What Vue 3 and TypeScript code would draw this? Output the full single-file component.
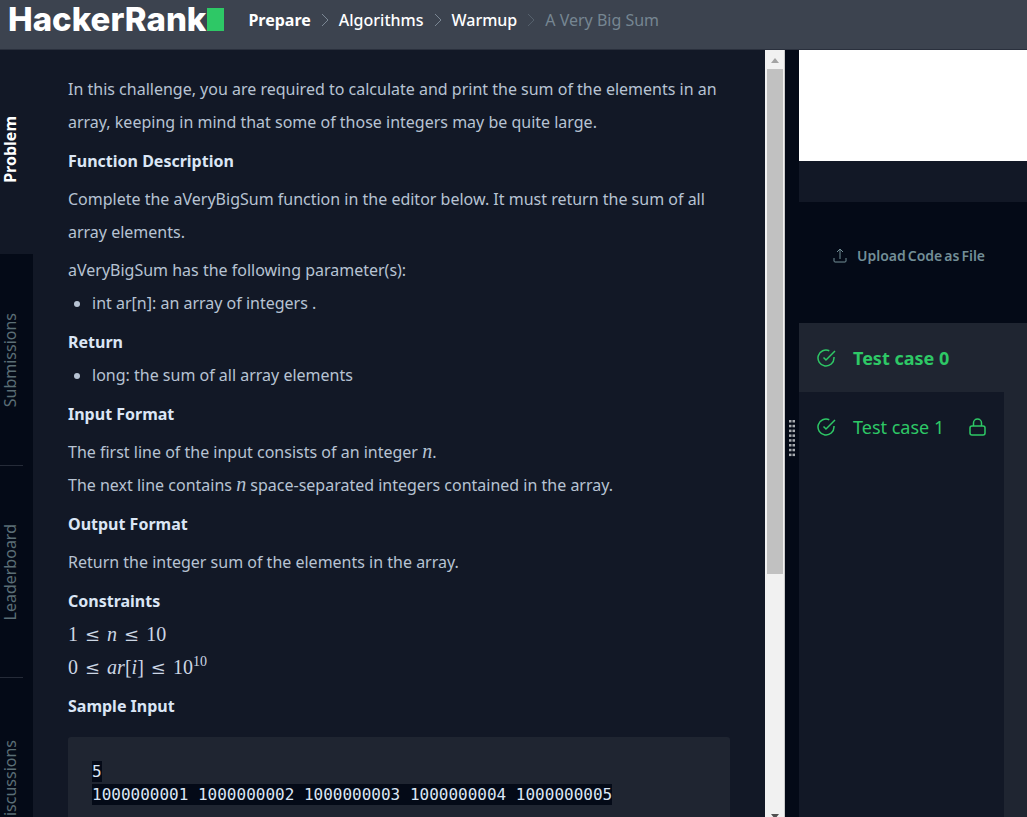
<script setup lang="ts">
import { ref } from 'vue'

const crumbs: string[] = ['Prepare', 'Algorithms', 'Warmup']
const tabs: string[] = ['Problem', 'Submissions', 'Leaderboard', 'Discussions']
const activeTab = ref<string>('Problem')
const uploadWords: string[] = ['Upload', 'Code', 'as', 'File']
const cases = [
  { name: 'Test case 0', locked: false },
  { name: 'Test case 1', locked: true },
]
const activeCase = ref<number>(0)
const sampleInput: string = '5\n1000000001 1000000002 1000000003 1000000004 1000000005'
</script>

<template>
  <div class="page">
    <header class="topbar">
      <a class="logo" href="#"><span>HackerRank</span><i class="block"></i></a>
      <nav class="crumbs" aria-label="Breadcrumb">
        <template v-for="(c, i) in crumbs" :key="c">
          <a href="#" :class="{ strong: i === 0 }">{{ c }}</a>
          <svg class="chevron" :class="{ faint: i === 2 }" viewBox="0 0 8 14" aria-hidden="true"><path d="M1 1l6 6-6 6" /></svg>
        </template>
        <span class="current">A Very Big Sum</span>
      </nav>
    </header>

    <div class="workspace">
      <nav class="tabs" aria-label="Challenge">
        <button v-for="t in tabs" :key="t" type="button" class="tab" :class="{ active: activeTab === t }" @click="activeTab = t">
          <span>{{ t }}</span>
        </button>
      </nav>

      <main class="problem">
        <p>In this challenge, you are required to calculate and print the sum of the elements in an array, keeping in mind that some of those integers may be quite large.</p>
        <h2>Function Description</h2>
        <p>Complete the aVeryBigSum function in the editor below. It must return the sum of all array elements.</p>
        <p>aVeryBigSum has the following parameter(s):</p>
        <ul><li>int ar[n]: an array of integers .</li></ul>
        <h2>Return</h2>
        <ul><li>long: the sum of all array elements</li></ul>
        <h2>Input Format</h2>
        <p>The first line of the input consists of an integer <span class="math"><i>n</i></span>.<br>The next line contains <span class="math"><i>n</i></span> space-separated integers contained in the array.</p>
        <h2>Output Format</h2>
        <p>Return the integer sum of the elements in the array.</p>
        <h2>Constraints</h2>
        <div class="formula math">1<b>≤</b><i>n</i><b>≤</b>10</div>
        <div class="formula math">0<b>≤</b><i>ar</i>[<i>i</i>]<b>≤</b>10<sup>10</sup></div>
        <h2>Sample Input</h2>
        <pre><code>{{ sampleInput }}</code></pre>
      </main>

      <div class="scrollbar" aria-hidden="true">
        <svg class="arrow up" viewBox="0 0 8 5"><path d="M0 5l4-5 4 5z" /></svg>
        <div class="track"><div class="thumb"></div></div>
        <svg class="arrow down" viewBox="0 0 8 5"><path d="M0 0h8l-4 5z" /></svg>
      </div>

      <div class="splitter">
        <svg class="grip" viewBox="0 0 6 37" aria-hidden="true">
          <template v-for="r in 8" :key="r">
            <rect x="0" :y="(r - 1) * 4.8" width="2.500" height="2.500" />
            <rect x="3.500" :y="(r - 1) * 4.8" width="2.500" height="2.500" />
          </template>
        </svg>
      </div>

      <aside class="side">
        <div class="editor"></div>
        <div class="status"></div>
        <div class="actions">
          <button type="button" class="upload">
            <svg viewBox="0 0 14 15" aria-hidden="true"><path d="M7 11V1M4 4l3-3 3 3M1 10v3q0 1 1 1h10q1 0 1-1v-3" /></svg>
            <span class="words"><span v-for="w in uploadWords" :key="w">{{ w }}</span></span>
          </button>
        </div>
        <div class="results">
          <button v-for="(c, i) in cases" :key="c.name" type="button" class="case" :class="{ active: activeCase === i }" @click="activeCase = i">
            <svg class="check" viewBox="0 0 19 18" aria-hidden="true"><path d="M17 8v1a8 8 0 1 1-4.700-7.300M18 2l-9 9-2.500-2.500" /></svg>
            <span>{{ c.name }}</span>
            <svg v-if="c.locked" class="lock" viewBox="0 0 17 18" aria-hidden="true"><rect x="1" y="8" width="15" height="9" rx="2" /><path d="M4.500 8V5a4 4 0 0 1 8 0v3" /></svg>
          </button>
          <div class="rest"></div>
        </div>
      </aside>
    </div>
  </div>
</template>

<style>
body { margin: 0; background: #040a17; }
</style>

<style scoped>
.page {
  height: 100vh;
  overflow: hidden;
  display: flex;
  flex-direction: column;
  font-family: "Noto Sans", "Open Sans", sans-serif;
  font-size: 16px;
  color: #b7c3d3;
  background: #040a17;
}
button { font: inherit; border: 0; padding: 0; background: none; cursor: pointer; }
a { color: inherit; text-decoration: none; }
svg { fill: none; flex: none; }

.topbar {
  flex: none;
  height: 50px;
  box-sizing: border-box;
  padding: 0 8px 10px;
  display: flex;
  align-items: center;
  gap: 24px;
  background: #3c434f;
  border-bottom: 1px solid #2a303d;
}
.logo { display: flex; align-items: center; gap: 1px; font-family: Inter, "Noto Sans", sans-serif; font-size: 33px; line-height: 39px; font-weight: 800; color: #fff; }
.block { width: 17px; height: 23px; background: #2ec866; }
.crumbs { display: flex; align-items: center; gap: 10px; color: #fff; font-weight: 500; }
.crumbs .strong { font-weight: 700; }
.chevron { width: 8px; height: 14px; stroke: #7b8794; }
.chevron.faint { stroke: #55606c; }
.current { color: #768692; font-weight: 400; }

.workspace { flex: 1; min-height: 0; display: flex; }

.tabs { width: 33px; flex: none; display: flex; flex-direction: column; }
.tab {
  height: 212px;
  flex: none;
  padding: 0 14px 0 0;
  display: flex;
  align-items: center;
  justify-content: center;
  color: #5b6e76;
  background: linear-gradient(#252b38, #252b38) left bottom / 23px 1px no-repeat;
}
.tab span { writing-mode: vertical-rl; transform: rotate(180deg); line-height: 24px; }
.tab.active { height: 204px; padding-bottom: 6px; color: #fff; font-weight: 700; background: #121826; }

.problem { flex: 1; min-width: 0; padding: 23px 35px 0; background: #121826; line-height: 33px; overflow: hidden; }
.problem p { margin: 5px 0 0; }
.problem p:first-child { margin: 0; }
.problem h2 { margin: 6px 0 0; font-size: 16px; font-weight: 700; color: #dbe6f5; }
.problem ul { margin: 0; padding-left: 24px; }
.math { font-family: "Liberation Serif", serif; font-size: 20px; line-height: 1; }
.formula { height: 33px; line-height: 33px; color: #ccd6e4; }
.formula b { font-family: "DejaVu Serif", serif; font-size: 18px; font-weight: 400; line-height: 1; margin: 0 7px; }
.formula sup { font-size: 14px; line-height: 1; }
pre {
  margin: 14px 0 0;
  padding: 23px 24px 24px;
  border-radius: 3px;
  background: #1f2531;
  line-height: 23px;
  color: #dbe6f5;
}
code { font-family: "DejaVu Sans Mono", monospace; font-size: 16px; padding: 1px 0; background: #040a17; }

.scrollbar {
  width: 20px;
  flex: none;
  box-sizing: border-box;
  padding: 8px 0 0;
  display: flex;
  flex-direction: column;
  align-items: center;
  background: #f1f1f1;
  border-right: 1px solid #c9c9c9;
}
.arrow { width: 8px; height: 5px; }
.up { fill: #a3a3a3; }
.down { fill: #505050; margin-bottom: -2px; }
.track { flex: 1; min-height: 0; width: 16px; padding-top: 6px; }
.thumb { height: calc(68% - 2px); background: #c1c1c1; }

.splitter { width: 14px; flex: none; display: flex; align-items: center; justify-content: center; padding-top: 10px; box-sizing: border-box; }
.grip { width: 6px; height: 37px; fill: #a8abb0; }

.side { width: 228px; flex: none; display: flex; flex-direction: column; }
.editor { height: 111px; background: #fff; }
.status { height: 41px; background: #121826; }
.actions { height: 121px; display: flex; align-items: center; padding: 0 34px; box-sizing: border-box; }
.upload { display: flex; align-items: center; gap: 10px; color: #738f97; font-size: 14px; font-weight: 600; line-height: 20px; margin-bottom: 14px; }
.upload svg { width: 14px; height: 15px; stroke: #738f97; }
.words { display: flex; gap: 2px; }
.results { flex: 1; display: flex; flex-direction: column; background: #1f2531; }
.case {
  height: 69px;
  flex: none;
  margin-right: 23px;
  padding: 0 18px;
  display: flex;
  align-items: center;
  color: #2ec866;
  font-size: 18px;
  background: #121826;
}
.case.active { margin-right: 0; background: #1f2531; font-weight: 700; }
.check { width: 19px; height: 18px; margin-right: 17px; stroke: currentColor; stroke-width: 1.500; }
.lock { width: 17px; height: 18px; margin-left: auto; stroke: currentColor; stroke-width: 1.500; }
.rest { flex: 1; margin-right: 23px; background: #121826; }
</style>
